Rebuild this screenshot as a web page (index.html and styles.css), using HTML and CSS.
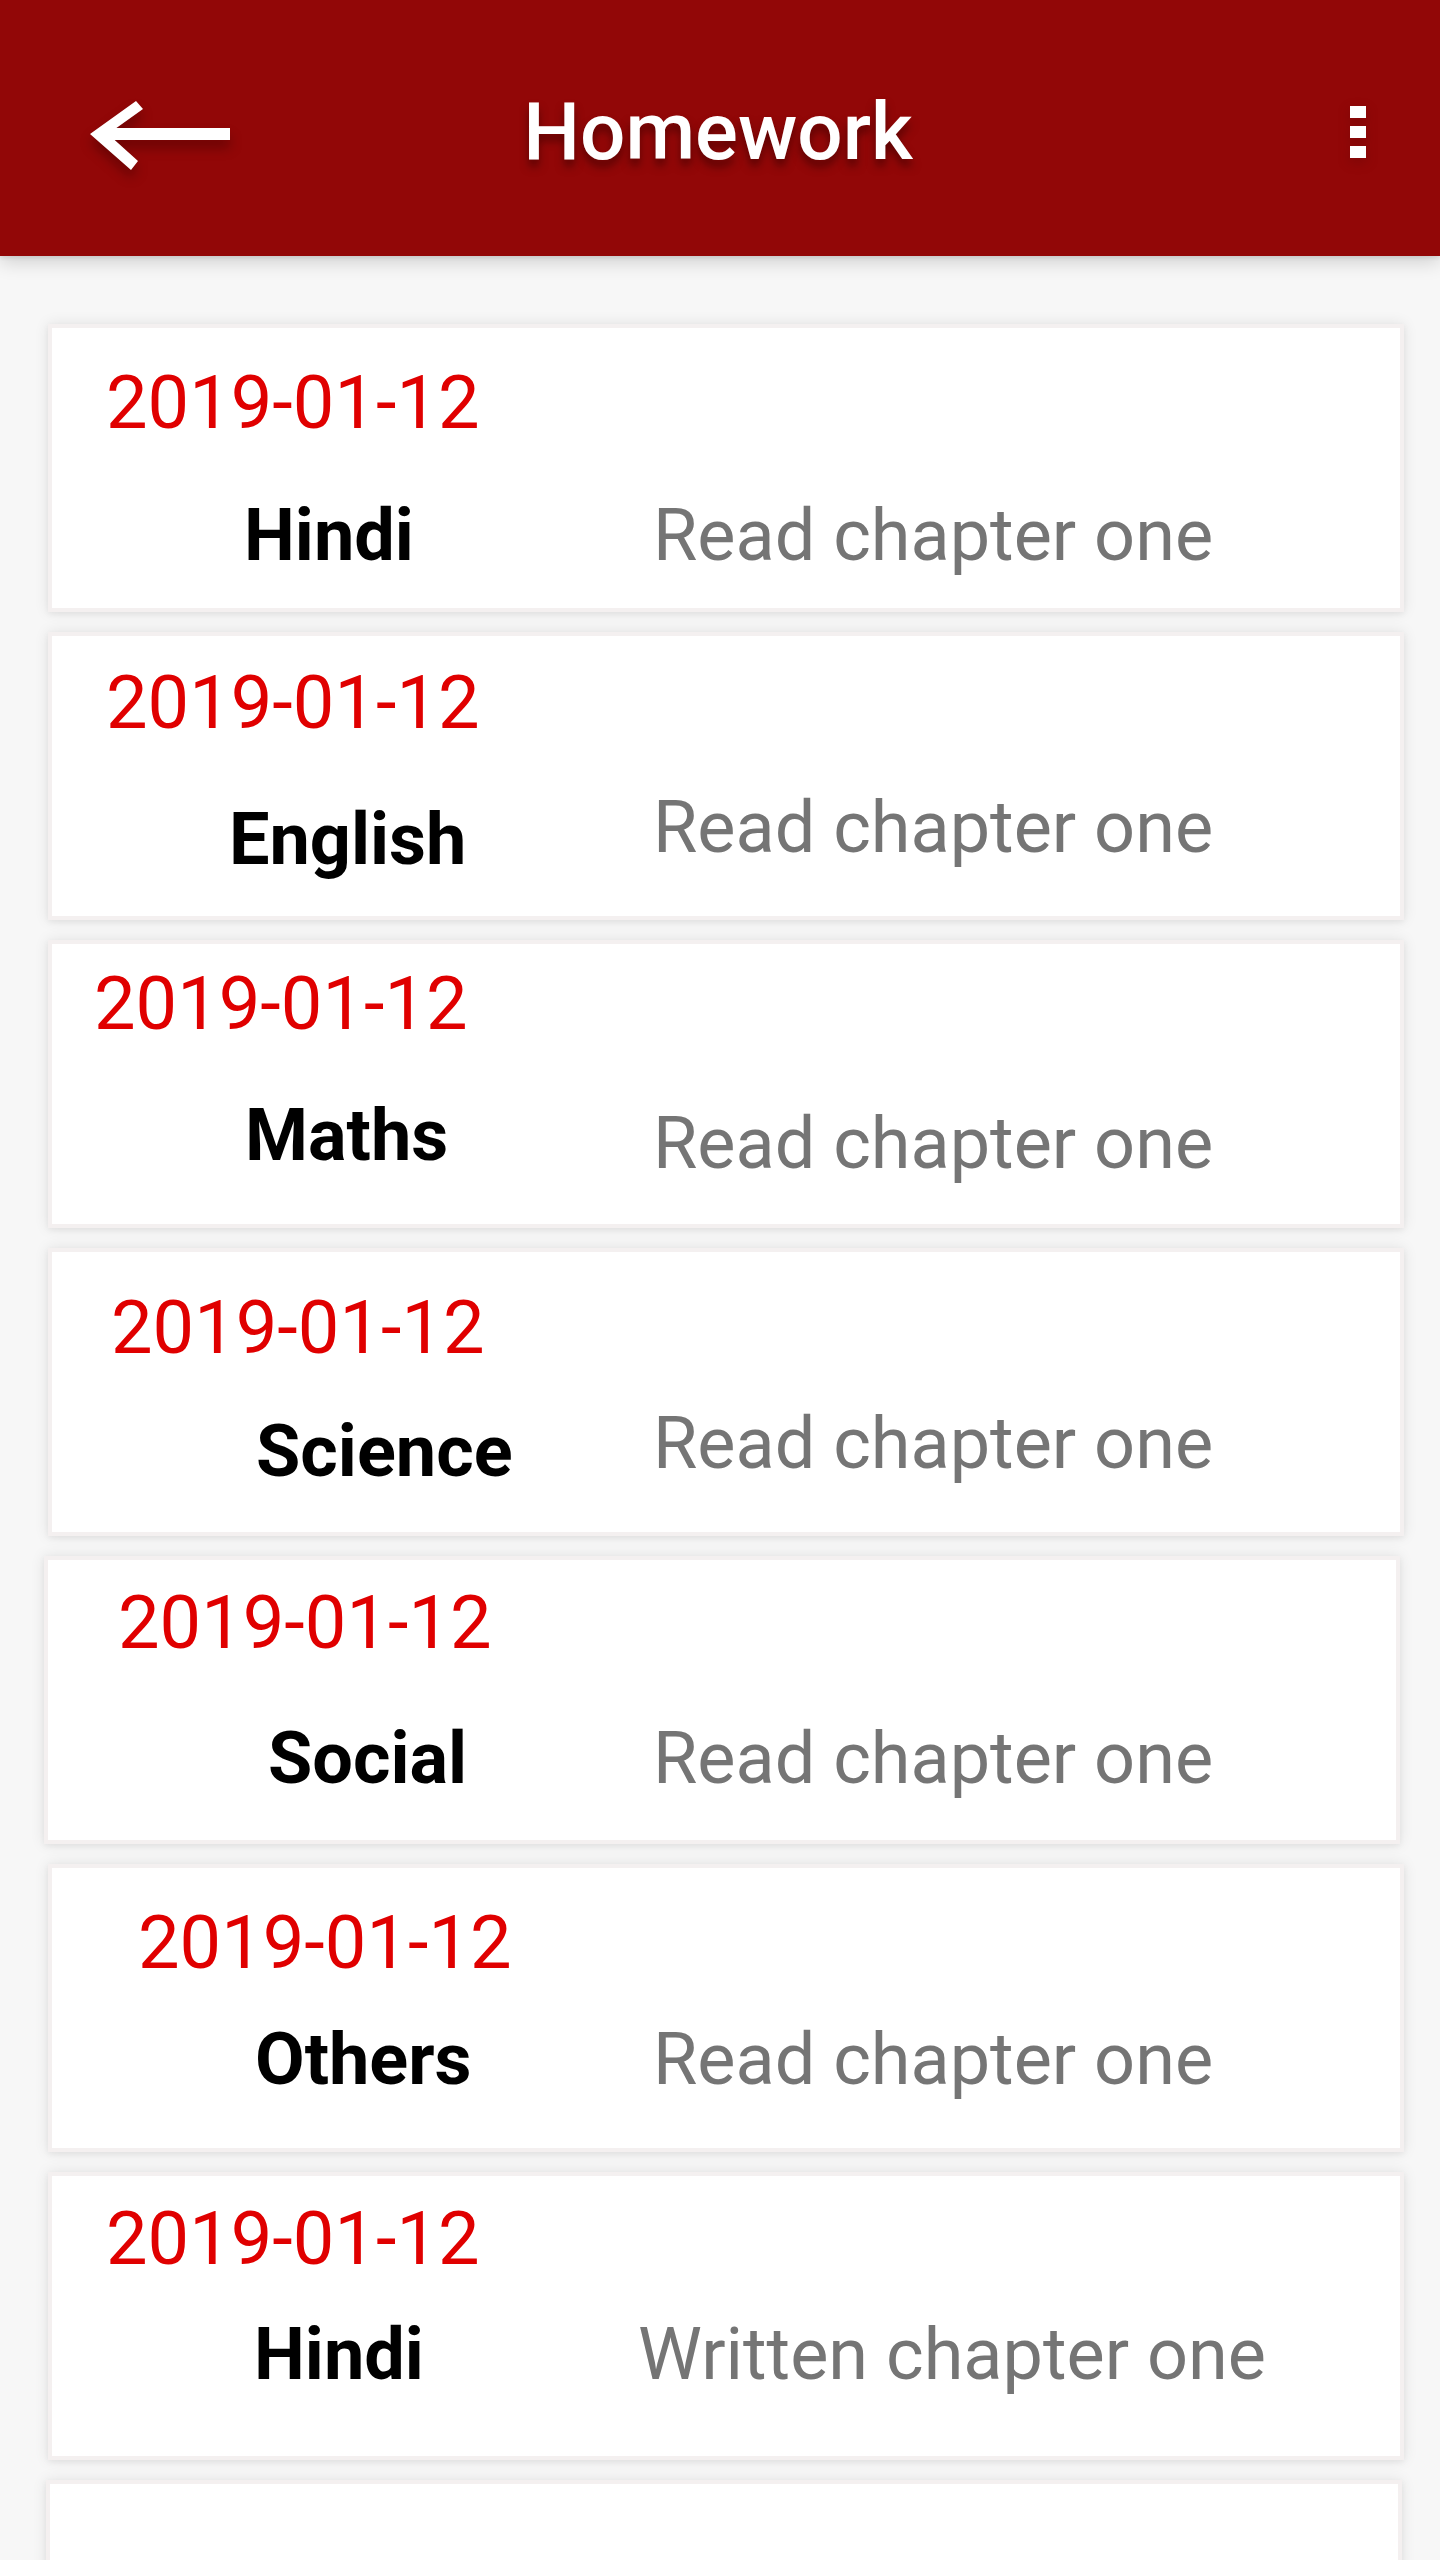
FILE: index.html
```html
<!DOCTYPE html>
<html lang="en">
<head>
<meta charset="utf-8">
<title>Homework</title>
<link rel="stylesheet" href="styles.css">
</head>
<body>
<div class="page">
  <header class="appbar">
    <svg class="appbar__back" width="160" height="90" viewBox="80 87 160 90" aria-hidden="true">
      <polygon fill="#fff" points="90,134 136,101 143,109 108,134 138,161 131,170"/>
      <rect fill="#fff" x="100" y="128" width="130" height="12"/>
    </svg>
    <h1 class="appbar__title">Homework</h1>
    <svg class="appbar__menu" width="16" height="52" viewBox="0 0 16 52" aria-hidden="true">
      <rect fill="#fff" x="0" y="0" width="16" height="12"/>
      <rect fill="#fff" x="0" y="20" width="16" height="12"/>
      <rect fill="#fff" x="0" y="40" width="16" height="12"/>
    </svg>
  </header>

  <main class="list">
    <article class="card card--1">
      <div class="card__date">2019-01-12</div>
      <div class="card__row">
        <div class="card__subject">Hindi</div>
        <div class="card__desc">Read chapter one</div>
      </div>
    </article>
    <article class="card card--2">
      <div class="card__date">2019-01-12</div>
      <div class="card__row">
        <div class="card__subject">English</div>
        <div class="card__desc">Read chapter one</div>
      </div>
    </article>
    <article class="card card--3">
      <div class="card__date">2019-01-12</div>
      <div class="card__row">
        <div class="card__subject">Maths</div>
        <div class="card__desc">Read chapter one</div>
      </div>
    </article>
    <article class="card card--4">
      <div class="card__date">2019-01-12</div>
      <div class="card__row">
        <div class="card__subject">Science</div>
        <div class="card__desc">Read chapter one</div>
      </div>
    </article>
    <article class="card card--5">
      <div class="card__date">2019-01-12</div>
      <div class="card__row">
        <div class="card__subject">Social</div>
        <div class="card__desc">Read chapter one</div>
      </div>
    </article>
    <article class="card card--6">
      <div class="card__date">2019-01-12</div>
      <div class="card__row">
        <div class="card__subject">Others</div>
        <div class="card__desc">Read chapter one</div>
      </div>
    </article>
    <article class="card card--7">
      <div class="card__date">2019-01-12</div>
      <div class="card__row">
        <div class="card__subject">Hindi</div>
        <div class="card__desc">Written chapter one</div>
      </div>
    </article>
    <article class="card card--8"></article>
  </main>
</div>
</body>
</html>
```

FILE: styles.css
```css
* { box-sizing: border-box; }

html, body {
  margin: 0;
  padding: 0;
  background: #f7f7f7;
  font-family: Roboto, "Noto Sans", "Liberation Sans", sans-serif;
}

.page {
  width: 1440px;
  height: 2560px;
  overflow: hidden;
  position: relative;
  background: #f7f7f7;
}

/* ---------- App bar ---------- */
.appbar {
  position: relative;
  z-index: 2;
  height: 256px;
  padding: 8px 74px 0 74px;
  background: #920707;
  display: grid;
  grid-template-columns: 1fr auto 1fr;
  align-items: center;
  box-shadow: 0 6px 18px rgba(0, 0, 0, 0.16), 0 2px 4px rgba(0, 0, 0, 0.08);
}

.appbar__back {
  display: block;
  justify-self: start;
  margin-left: 6px;
  filter: drop-shadow(0 8px 6px rgba(60, 0, 0, 0.45));
}

.appbar__title {
  margin: 0 4px 0 0;
  color: #fff;
  font-size: 80px;
  line-height: 80px;
  font-weight: 500;
  text-shadow: 0 7px 9px rgba(50, 0, 0, 0.55);
}

.appbar__menu {
  display: block;
  justify-self: end;
  filter: drop-shadow(0 4px 6px rgba(60, 0, 0, 0.25));
}

/* ---------- List ---------- */
.list {
  padding-top: 68px;
  display: flex;
  flex-direction: column;
  gap: 20px;
}

.card {
  --date-top: 39px;
  --date-left: 54px;
  --subj-top: 61px;
  --subj-left: 192px;
  --desc-top: 61px;
  --desc-left: 53px;

  height: 288px;
  margin: 0 36px 0 48px;
  background: #fff;
  border: 4px solid #f4f0f0;
  box-shadow: 0 0 14px rgba(0, 0, 0, 0.09), 0 2px 6px rgba(0, 0, 0, 0.05);
  flex-shrink: 0;
}

.card__date {
  margin: var(--date-top) 0 0 var(--date-left);
  color: #e00000;
  font-size: 74px;
  line-height: 72px;
  font-weight: 400;
}

.card__row {
  display: grid;
  grid-template-columns: 548px 1fr;
  align-items: start;
}

.card__subject {
  margin-top: var(--subj-top);
  padding-left: var(--subj-left);
  color: #000;
  font-size: 72px;
  line-height: 72px;
  font-weight: 700;
  white-space: nowrap;
}

.card__desc {
  margin-top: var(--desc-top);
  padding-left: var(--desc-left);
  color: #757575;
  font-size: 72px;
  line-height: 72px;
  font-weight: 400;
  white-space: nowrap;
}

.card--1 { --date-top: 39px; --date-left: 54px; --subj-top: 61px; --subj-left: 192px; --desc-top: 61px; }
.card--2 { --date-top: 31px; --date-left: 54px; --subj-top: 65px; --subj-left: 177px; --desc-top: 53px; }
.card--3 { --date-top: 24px; --date-left: 42px; --subj-top: 60px; --subj-left: 193px; --desc-top: 68px; }
.card--4 { --date-top: 40px; --date-left: 59px; --subj-top: 52px; --subj-left: 204px; --desc-top: 44px; }
.card--5 { --date-top: 27px; --date-left: 70px; --subj-top: 64px; --subj-left: 220px; --desc-top: 64px; --desc-left: 57px; margin-left: 44px; margin-right: 40px; }
.card--6 { --date-top: 39px; --date-left: 86px; --subj-top: 45px; --subj-left: 203px; --desc-top: 45px; }
.card--7 { --date-top: 27px; --date-left: 54px; --subj-top: 44px; --subj-left: 202px; --desc-top: 44px; --desc-left: 38px; }
.card--8 { margin-left: 46px; margin-right: 38px; }
```
